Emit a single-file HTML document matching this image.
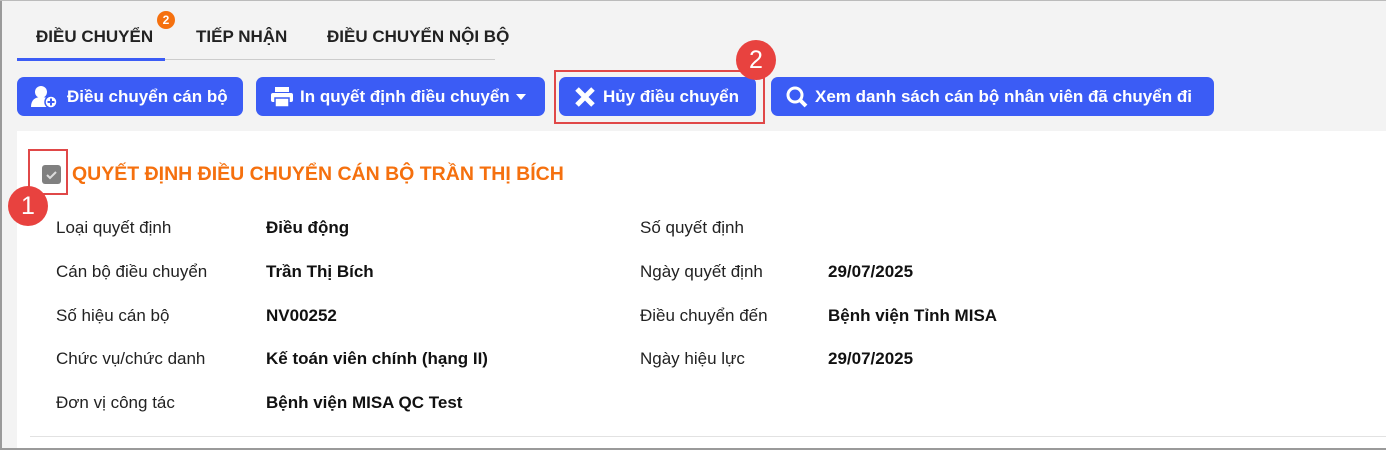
<!DOCTYPE html>
<html><head><meta charset="utf-8"><style>
*{box-sizing:border-box;margin:0;padding:0}
body{width:1386px;height:450px;background:#f3f3f3;font-family:"Liberation Sans",sans-serif;position:relative;overflow:hidden}
.a{position:absolute}
.tab{font-weight:bold;font-size:17px;color:#222;top:27px}
.btn{position:absolute;top:77px;height:39px;background:#3b5cf5;border-radius:7px;color:#fff;font-size:17px;font-weight:bold;display:flex;align-items:center;padding-left:14px;white-space:nowrap}
.btn svg{margin-right:6px}
.lab{font-size:17px;color:#222}
.val{font-size:17px;color:#111;font-weight:bold}
.circ{position:absolute;width:40px;height:40px;border-radius:50%;background:#e8423f;color:#fff;font-size:25px;text-align:center;line-height:40px}
</style></head><body>
<div class="a tab" style="left:36px">ĐIỀU CHUYỂN</div>
<div class="a" style="left:157px;top:11px;width:18px;height:18px;border-radius:50%;background:#f5700e;color:#fff;font-size:12px;font-weight:bold;text-align:center;line-height:18px">2</div>
<div class="a tab" style="left:196px">TIẾP NHẬN</div>
<div class="a tab" style="left:327px">ĐIỀU CHUYỂN NỘI BỘ</div>
<div class="a" style="left:17px;top:58px;width:148px;height:3px;background:#3b5cf5"></div>
<div class="a" style="left:165px;top:59px;width:330px;height:1px;background:#ccc"></div>

<div class="btn" style="left:17px;width:226px"><svg width="30" height="24" viewBox="0 0 30 24"><circle cx="10" cy="7" r="6" fill="#fff"/><path d="M0 22c0-7 4-10 10-10s8 2 9 4v6z" fill="#fff"/><circle cx="20" cy="17" r="6" fill="#fff" stroke="#3b5cf5" stroke-width="1.5"/><path d="M20 13.5v7M16.5 17h7" stroke="#3b5cf5" stroke-width="2"/></svg>Điều chuyển cán bộ</div>
<div class="btn" style="left:256px;width:289px"><svg width="24" height="22" viewBox="0 0 24 22"><rect x="5" y="1" width="14" height="5" fill="#fff"/><rect x="1" y="7" width="22" height="9" rx="2" fill="#fff"/><rect x="5" y="12" width="14" height="9" fill="#fff" stroke="#3b5cf5" stroke-width="1.5"/></svg>In quyết định điều chuyển <span style="margin-left:6px;border-left:5px solid transparent;border-right:5px solid transparent;border-top:6px solid #fff"></span></div>
<div class="btn" style="left:559px;width:197px"><svg width="24" height="22" viewBox="0 0 24 22"><path d="M4 3l16 16M20 3L4 19" stroke="#fff" stroke-width="5"/></svg>Hủy điều chuyển</div>
<div class="a" style="left:554px;top:70px;width:211px;height:54px;border:2px solid #e04848"></div>
<div class="circ" style="left:736px;top:40px">2</div>
<div class="btn" style="left:771px;width:443px"><svg width="24" height="24" viewBox="0 0 24 24"><circle cx="10" cy="10" r="7" fill="none" stroke="#fff" stroke-width="3"/><path d="M15 15l6 6" stroke="#fff" stroke-width="4"/></svg>Xem danh sách cán bộ nhân viên đã chuyển đi</div>

<div class="a" style="left:17px;top:131px;width:1369px;height:317px;background:#fff"></div>
<div class="a" style="left:42px;top:165px;width:19px;height:19px;background:#808080;border-radius:3px"><svg width="19" height="19"><path d="M5 10l3 3 6-6" stroke="#ddd" stroke-width="2" fill="none"/></svg></div>
<div class="a" style="left:28px;top:149px;width:40px;height:46px;border:2px solid #e04848"></div>
<div class="circ" style="left:8px;top:186px">1</div>
<div class="a" style="left:72px;top:163px;font-size:19.5px;font-weight:bold;color:#f5700e">QUYẾT ĐỊNH ĐIỀU CHUYỂN CÁN BỘ TRẦN THỊ BÍCH</div>

<div class="a lab" style="left:56px;top:218px">Loại quyết định</div><div class="a val" style="left:266px;top:218px">Điều động</div>
<div class="a lab" style="left:56px;top:262px">Cán bộ điều chuyển</div><div class="a val" style="left:266px;top:262px">Trần Thị Bích</div>
<div class="a lab" style="left:56px;top:306px">Số hiệu cán bộ</div><div class="a val" style="left:266px;top:306px">NV00252</div>
<div class="a lab" style="left:56px;top:349px">Chức vụ/chức danh</div><div class="a val" style="left:266px;top:349px">Kế toán viên chính (hạng II)</div>
<div class="a lab" style="left:56px;top:393px">Đơn vị công tác</div><div class="a val" style="left:266px;top:393px">Bệnh viện MISA QC Test</div>
<div class="a lab" style="left:640px;top:218px">Số quyết định</div>
<div class="a lab" style="left:640px;top:262px">Ngày quyết định</div><div class="a val" style="left:828px;top:262px">29/07/2025</div>
<div class="a lab" style="left:640px;top:306px">Điều chuyển đến</div><div class="a val" style="left:828px;top:306px">Bệnh viện Tỉnh MISA</div>
<div class="a lab" style="left:640px;top:349px">Ngày hiệu lực</div><div class="a val" style="left:828px;top:349px">29/07/2025</div>
<div class="a" style="left:30px;top:436px;width:1356px;height:1px;background:#e2e2e2"></div>
<div class="a" style="left:0;top:0;width:2px;height:450px;background:#9a9a9a"></div>
<div class="a" style="left:0;top:0;width:1386px;height:1px;background:#bbb"></div>
<div class="a" style="left:0;top:448px;width:1386px;height:2px;background:#9a9a9a"></div>
</body></html>
